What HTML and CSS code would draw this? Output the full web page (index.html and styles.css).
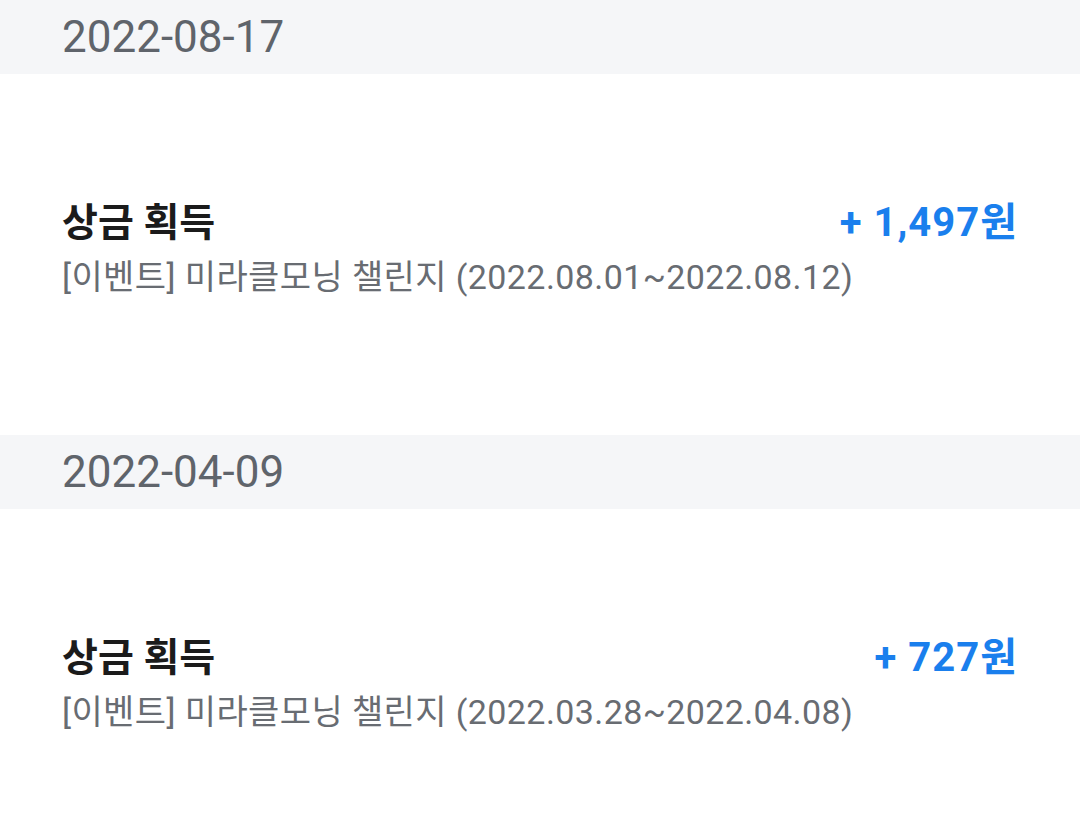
FILE: index.html
```html
<!DOCTYPE html>
<html lang="ko">
<head>
  <meta charset="UTF-8" />
  <meta name="viewport" content="width=device-width, initial-scale=1.0" />
  <title>상금 내역</title>
  <link rel="stylesheet" href="styles.css">
</head>
<body>
  <div class="lista">
    <div class="fecha">2022-08-17</div>
    <div class="item">
      <div class="fila">
        <div class="titulo">상금 획득</div>
        <div class="monto">+ 1,497원</div>
      </div>
      <div class="detalle">[이벤트] 미라클모닝 챌린지 (2022.08.01~2022.08.12)</div>
    </div>

    <div class="fecha">2022-04-09</div>
    <div class="item">
      <div class="fila">
        <div class="titulo">상금 획득</div>
        <div class="monto">+ 727원</div>
      </div>
      <div class="detalle">[이벤트] 미라클모닝 챌린지 (2022.03.28~2022.04.08)</div>
    </div>
  </div>
</body>
</html>
```

FILE: styles.css
```css
body {
  margin: 0;
  background: #fff;
  font-family: Roboto, 'Noto Sans CJK KR', sans-serif;
}
.fecha {
  background: #f5f6f8;
  color: #5f646b;
  font-size: 44px;
  height: 74px;
  display: flex;
  align-items: center;
  padding: 0 62px;
}
.item {
  height: 361px;
  box-sizing: border-box;
  display: flex;
  flex-direction: column;
  justify-content: center;
  gap: 10px;
  padding: 0 62px 12px;
}
.fila {
  display: flex;
  justify-content: space-between;
  align-items: center;
}
.titulo {
  font-size: 39px;
  font-weight: bold;
  color: #1b1b1b;
  line-height: 1.2;
}
.detalle {
  font-size: 34px;
  letter-spacing: 0.4px;
  color: #686c72;
  line-height: 1.2;
}
.monto {
  font-size: 40px;
  font-weight: bold;
  letter-spacing: 1px;
  color: #1a7fed;
  line-height: 1.2;
}
```
